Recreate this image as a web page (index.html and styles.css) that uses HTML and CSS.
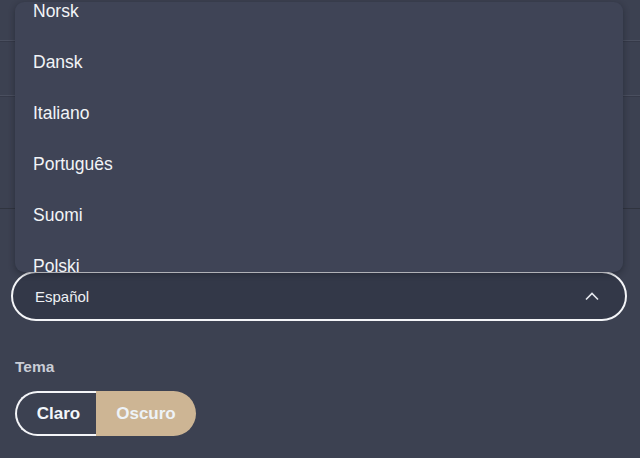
FILE: index.html
```html
<!DOCTYPE html>
<html lang="es">
<head>
  <meta charset="UTF-8">
  <title>Ajustes</title>
  <link rel="stylesheet" href="styles.css">
</head>
<body>
  <div class="settings">
    <!-- rows behind the open language menu -->
    <div class="row row-a"></div>
    <div class="row row-b"></div>
    <div class="row row-c"></div>
    <div class="row row-d"></div>

    <div class="field">
      <div class="select">
        <span>Español</span>
        <svg class="chevron" width="14" height="9" viewBox="0 0 14 9">
          <path d="M1 7.5 L7 1.5 L13 7.5" fill="none" stroke="#e6e8ee" stroke-width="1.6"/>
        </svg>
      </div>

      <div class="menu">
        <ul class="options">
          <li>Norsk</li>
          <li>Dansk</li>
          <li>Italiano</li>
          <li>Português</li>
          <li>Suomi</li>
          <li>Polski</li>
        </ul>
      </div>
    </div>

    <div class="label">Tema</div>
    <div class="toggle">
      <button class="seg">Claro</button>
      <button class="seg active">Oscuro</button>
    </div>
  </div>
</body>
</html>
```

FILE: styles.css
```css
body {
  margin: 0;
  background-color: #3c4151;
  font-family: "Liberation Sans", Arial, sans-serif;
  color: #f2f4f7;
}

.settings {
  position: relative;
  padding: 0 13px 0 11px;
}

.row {
  margin: 0 -13px 0 -11px;
}

.row-a {
  height: 40px;
  border-bottom: 1px solid #4a4f5f;
  box-shadow: 0 1px 0 #353948;
}

.row-b {
  height: 54px;
  border-bottom: 1px solid #4a4f5f;
  box-shadow: 0 1px 0 #353948;
}

.row-c {
  height: 112px;
  border-bottom: 1px solid #30343f;
}

.row-d {
  height: 62px;
}

.field {
  position: relative;
}

.select {
  height: 46px;
  border: 2px solid #f4f5f8;
  border-radius: 25px;
  background-color: #333848;
  display: flex;
  align-items: center;
  justify-content: space-between;
  padding: 0 26px 0 22px;
  font-size: 15px;
  color: #eef0f4;
}

.chevron {
  display: block;
}

.menu {
  position: absolute;
  left: 4px;
  right: 4px;
  bottom: 49px;
  height: 270px;
  overflow: hidden;
  background-color: #3f4456;
  border-radius: 9px;
  box-shadow: 0 2px 6px rgba(20, 22, 30, 0.45);
}

.options {
  list-style: none;
  margin: -16px 0 0 0;
  padding: 0;
}

.options li {
  height: 51px;
  line-height: 51px;
  padding-left: 18px;
  font-size: 17.5px;
}

.label {
  margin: 37px 0 0 4px;
  font-size: 15.5px;
  font-weight: bold;
  color: #c9cdd6;
}

.toggle {
  display: flex;
  margin: 15px 0 0 4px;
}

.seg {
  height: 45px;
  border: none;
  font-family: inherit;
  font-size: 17px;
  font-weight: bold;
  color: #f3f6fa;
  background: none;
  padding: 0;
}

.seg:first-child {
  width: 81px;
  border: 2px solid #f4f5f8;
  border-right: none;
  border-radius: 23px 0 0 23px;
  padding-left: 4px;
}

.seg.active {
  width: 100px;
  background-color: #cdb594;
  border-radius: 0 23px 23px 0;
  color: #eef3f8;
}
```
